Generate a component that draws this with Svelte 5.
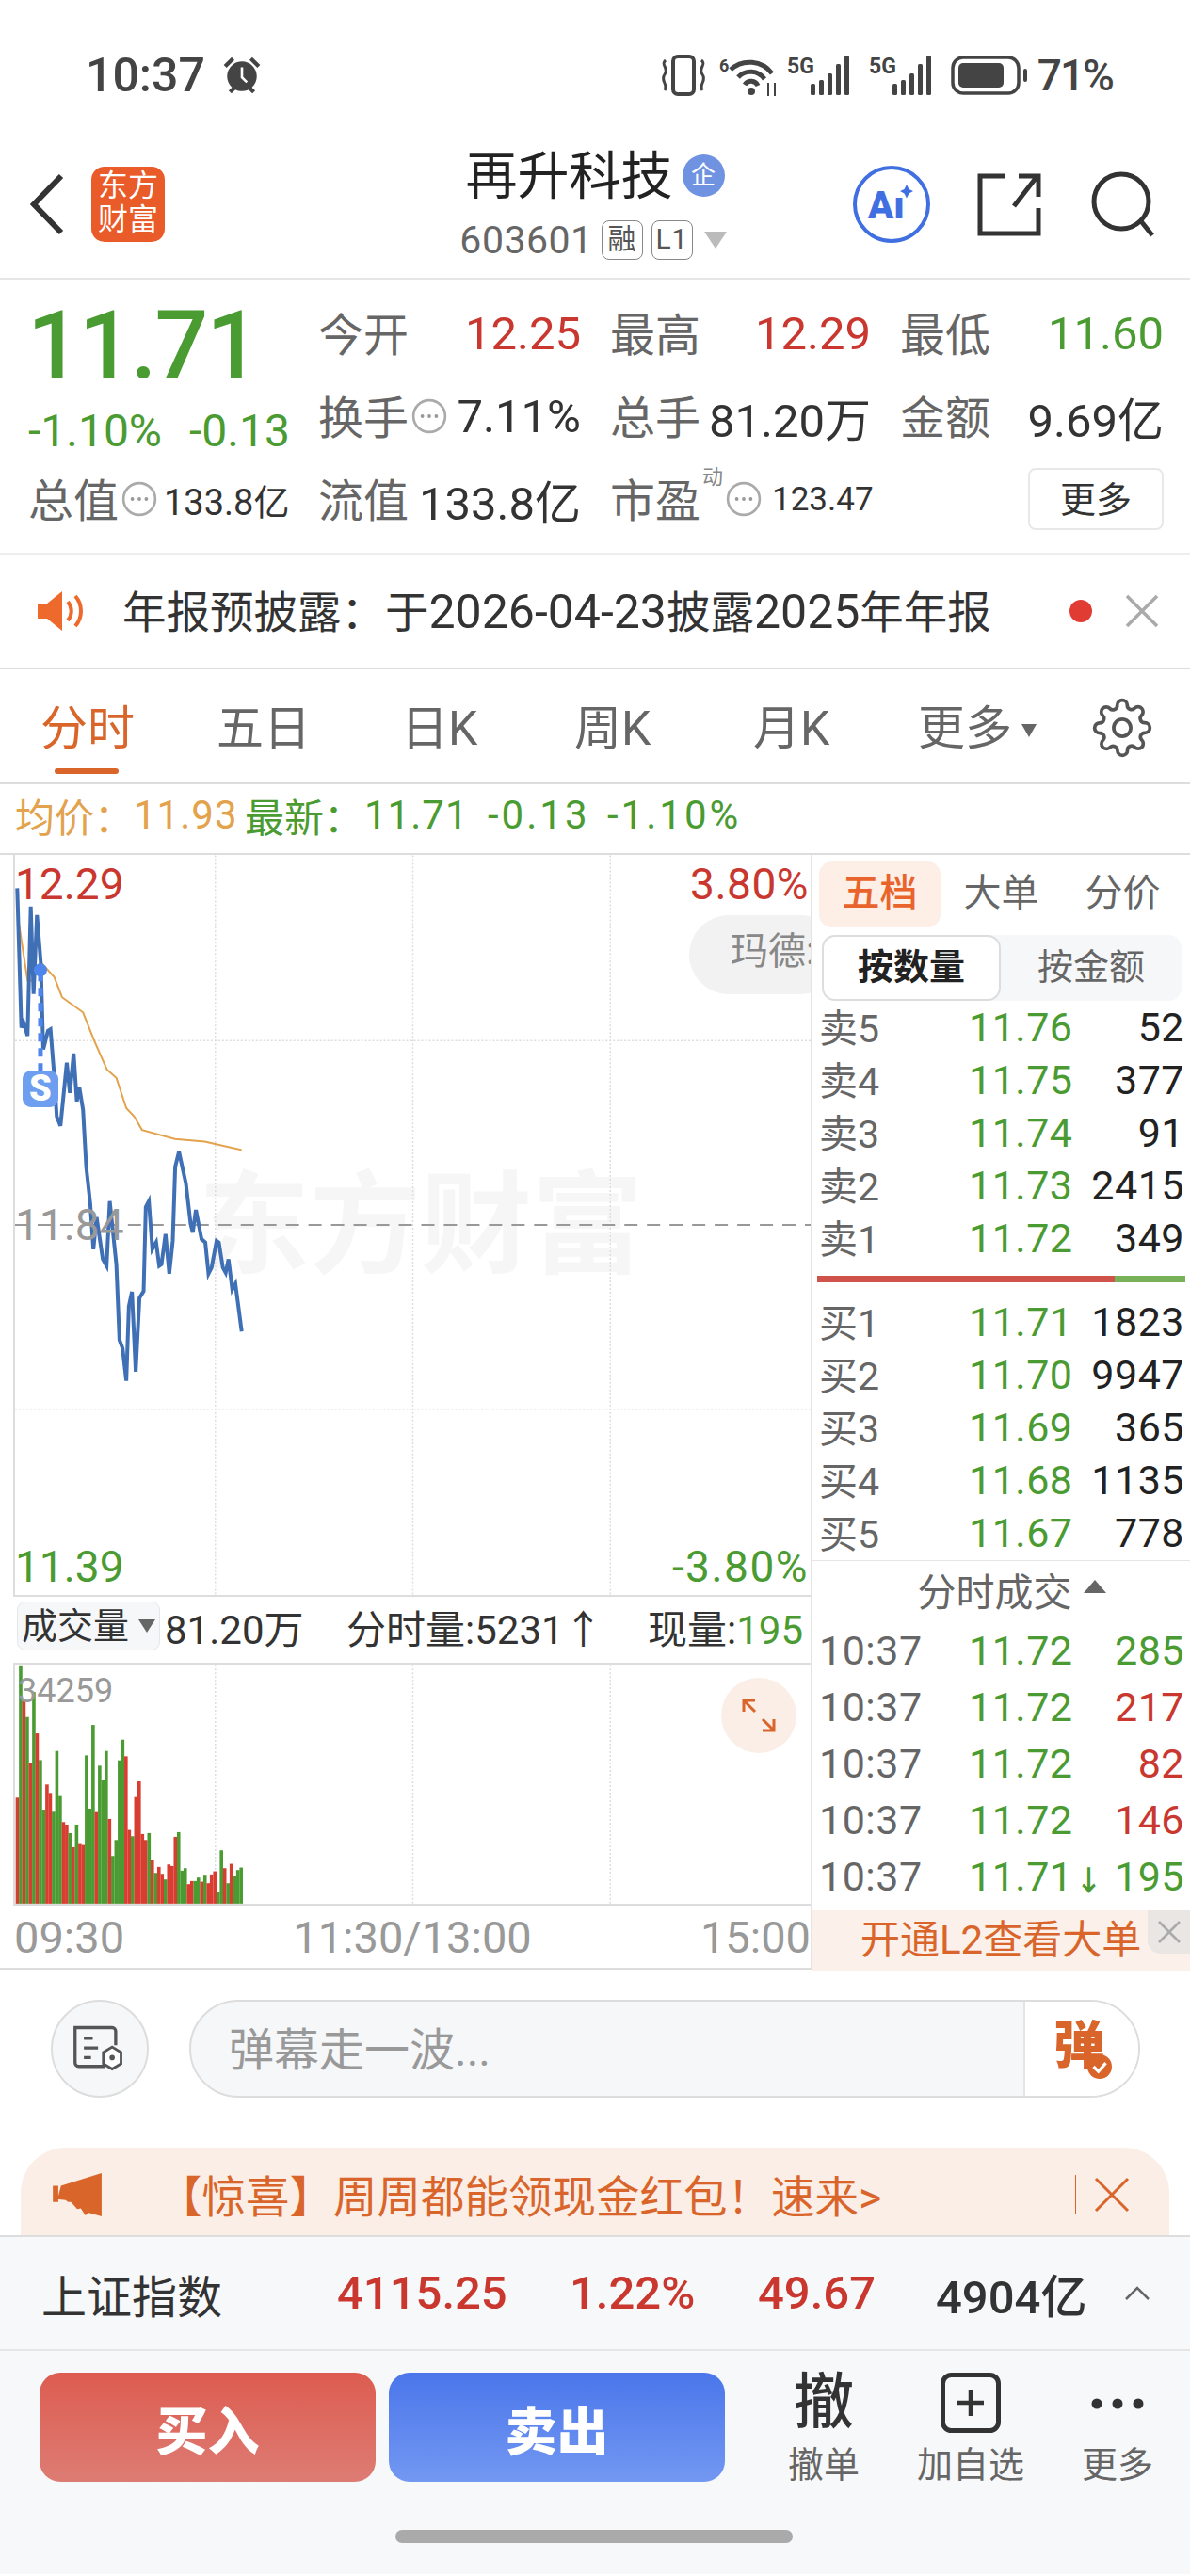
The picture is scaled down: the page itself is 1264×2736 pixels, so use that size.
<script lang="ts">
  // price line, read off the chart as [x, y] in px relative to the chart box
  const rawLine = [[52,120],[65,535],[72,520],[85,560],[95,175],[104,435],[115,200],[127,340],[135,600],[150,545],[158,540],[170,680],[178,800],[190,828],[210,640],[220,730],[232,612],[242,755],[250,712],[262,780],[272,950],[285,1060],[295,1195],[305,1100],[325,1225],[337,1245],[347,1052],[368,1240],[378,1465],[388,1490],[400,1587],[408,1365],[418,1322],[430,1560],[442,1340],[455,1320],[462,1070],[472,1052],[483,1195],[495,1175],[505,1245],[512,1240],[525,1150],[537,1268],[548,1170],[556,950],[568,905],[590,1000],[605,1120],[612,1145],[622,1078],[640,1165],[652,1175],[662,1268],[672,1250],[688,1170],[695,1175],[708,1250],[717,1265],[726,1225],[738,1315],[748,1298],[768,1440]];
  const rawAvg = [[58,230],[85,395],[100,395],[127,340],[170,385],[195,445],[262,490],[298,575],[338,660],[368,685],[400,775],[425,800],[450,840],[555,867],[650,875],[768,900]];
  const toPts = (a: number[][]) => a.map(([x, y]) => `${(x / 3 - 15).toFixed(1)},${(y / 2.8 - 8).toFixed(1)}`).join(' ');

  const volTops = [687,265,380,430,575,350,482,567,725,645,672,732,538,682,765,773,800,845,773,835,838,552,722,455,733,585,632,538,755,873,822,568,502,555,790,810,685,635,803,822,800,887,927,908,930,948,900,905,812,797,920,912,963,953,953,942,955,933,960,932,922,987,855,912,960,898,938,918,910];
  const volCols = 'rgrgrgrggrrgggrrgrgrrgggrgggrgggg' + 'rrgrrrrgrgrrgrrrgggrrggrgrrrggrgrgg';

  const sells = [['卖5','11.76','52'],['卖4','11.75','377'],['卖3','11.74','91'],['卖2','11.73','2415'],['卖1','11.72','349']];
  const buys = [['买1','11.71','1823'],['买2','11.70','9947'],['买3','11.69','365'],['买4','11.68','1135'],['买5','11.67','778']];
  const trades = [['11.72','285','g',''],['11.72','217','r',''],['11.72','82','r',''],['11.72','146','r',''],['11.71','195','g','↓']];
</script>

{#snippet info()}
  <svg class="info" viewBox="0 0 36 36"><circle cx="18" cy="18" r="16" fill="none" stroke="#aaa" stroke-width="2.5"/><circle cx="11" cy="18" r="1.8" fill="#999"/><circle cx="18" cy="18" r="1.8" fill="#999"/><circle cx="25" cy="18" r="1.8" fill="#999"/></svg>
{/snippet}

{#snippet signal()}
  <svg class="sig" viewBox="0 0 72 44">
    <text x="0" y="20" font-size="23" font-weight="700" fill="#444" font-family="Roboto">5G</text>
    <g fill="#444"><rect x="25" y="31" width="5" height="12" rx="1.5"/><rect x="34" y="27" width="5" height="16" rx="1.5"/><rect x="43" y="20" width="5" height="23" rx="1.5"/><rect x="52" y="10" width="5" height="33" rx="1.5"/><rect x="61" y="1" width="5" height="42" rx="1.5"/></g>
  </svg>
{/snippet}

<div class="page">
  <div class="status">
    <span class="clock">10:37</span>
    <svg class="alarm" viewBox="0 0 40 40"><circle cx="20" cy="21" r="15" fill="#444"/><path d="M20 12v10l5 5" fill="none" stroke="#fff" stroke-width="2.5"/><path d="M3 11 11 3M37 11 29 3M8 37l4-4M32 37l-4-4" stroke="#444" stroke-width="4"/></svg>
    <div class="spacer"></div>
    <svg class="vib" viewBox="0 0 52 44"><rect x="15" y="2" width="22" height="40" rx="5" fill="none" stroke="#444" stroke-width="4"/><path d="M7 6c-6 5 4 8-1 15s4 10 0 17M45 6c6 5-4 8 1 15s-4 10 0 17" fill="none" stroke="#444" stroke-width="3"/></svg>
    <svg class="wifi" viewBox="0 0 64 44"><text x="0" y="18" font-size="18" font-weight="700" fill="#444" font-family="Roboto">6</text><path d="M12 16a30 30 0 0 1 44 4M20 24a18 18 0 0 1 28 2M27 32a8 8 0 0 1 14 1" fill="none" stroke="#444" stroke-width="5"/><circle cx="34" cy="39" r="4" fill="#444"/><path d="M52 30v14M59 44V30" stroke="#444" stroke-width="2"/></svg>
    {@render signal()}
    {@render signal()}
    <svg class="batt" viewBox="0 0 82 44"><rect x="2" y="3" width="70" height="38" rx="11" fill="none" stroke="#444" stroke-width="3.5"/><rect x="8" y="9" width="48" height="26" rx="5" fill="#444"/><rect x="77" y="15" width="4" height="14" rx="2" fill="#444"/></svg>
    <span class="pct">71%</span>
  </div>

  <header class="head">
    <svg class="back" viewBox="0 0 36 66"><path d="M33 3 4 33l29 30" fill="none" stroke="#333" stroke-width="6"/></svg>
    <div class="logo">东方<br/>财富</div>
    <div class="head-mid">
      <div class="title">再升科技<span class="qi">企</span></div>
      <div class="code">603601<span class="tag">融</span><span class="tag">L1</span><i class="tri"></i></div>
    </div>
    <svg class="ai" viewBox="0 0 84 84"><circle cx="42" cy="42" r="39" fill="none" stroke="#3f6fe0" stroke-width="4"/><text x="17" y="57" font-size="40" font-weight="900" fill="#3f6fe0" font-family="Roboto">Aı</text><path d="m58 21 2.5 5 4.5 2-4.5 2.500-2.500 5-2.500-5-4.500-2.500 4.500-2z" fill="#3f6fe0"/></svg>
    <svg class="share" viewBox="0 0 68 68"><path d="M30 4H3v61h62V38M39 36 63 5M44 4h21v22" fill="none" stroke="#333" stroke-width="5"/></svg>
    <svg class="search" viewBox="0 0 70 72"><circle cx="33" cy="33" r="29" fill="none" stroke="#333" stroke-width="5"/><path d="m54 54 12 15" stroke="#333" stroke-width="5"/></svg>
  </header>

  <section class="quote">
    <div class="q-left">
      <div class="big">11.71</div>
      <div class="chg"><span>-1.10%</span><span>-0.13</span></div>
      <div class="tot"><b>总值</b>{@render info()}<span>133.8亿</span></div>
    </div>
    <div class="q-grid">
      <div class="cell"><b>今开</b><span class="red">12.25</span></div>
      <div class="cell"><b>最高</b><span class="red">12.29</span></div>
      <div class="cell"><b>最低</b><span class="green">11.60</span></div>
      <div class="cell"><b>换手</b>{@render info()}<span>7.11%</span></div>
      <div class="cell"><b>总手</b><span>81.20万</span></div>
      <div class="cell"><b>金额</b><span>9.69亿</span></div>
      <div class="cell"><b>流值</b><span>133.8亿</span></div>
      <div class="cell pe"><b>市盈</b><sup>动</sup>{@render info()}<span>123.47</span></div>
      <div class="cell end"><button>更多</button></div>
    </div>
  </section>

  <section class="notice">
    <svg class="horn" viewBox="0 0 52 44"><path d="M0 14h10L26 1v42L10 30H0z" fill="#ee6a2c"/><path d="M32 12c5 6 5 14 0 20M40 6c8 9 8 23 0 32" fill="none" stroke="#ee6a2c" stroke-width="4"/></svg>
    <span class="n-text">年报预披露：于<span>2026-04-23</span>披露<span>2025</span>年年报</span>
    <i class="dot"></i>
    <svg class="n-x" viewBox="0 0 36 36"><path d="m2 2 32 32M34 2 2 34" stroke="#aaa" stroke-width="3.5"/></svg>
  </section>

  <nav class="tabs">
    <a class="on" href="#a">分时</a><a href="#a">五日</a><a href="#a">日K</a><a href="#a">周K</a><a href="#a">月K</a><a href="#a">更多<i class="tri small"></i></a>
    <svg class="gear" viewBox="0 0 24 24"><path d="M19.4 15a1.65 1.65 0 0 0 .33 1.82l.06.06a2 2 0 0 1 0 2.83 2 2 0 0 1-2.83 0l-.06-.06a1.65 1.65 0 0 0-1.82-.33 1.65 1.65 0 0 0-1 1.51V21a2 2 0 0 1-2 2 2 2 0 0 1-2-2v-.09A1.65 1.65 0 0 0 9 19.4a1.65 1.65 0 0 0-1.82.33l-.06.06a2 2 0 0 1-2.83 0 2 2 0 0 1 0-2.83l.06-.06a1.65 1.65 0 0 0 .33-1.82 1.65 1.65 0 0 0-1.51-1H3a2 2 0 0 1-2-2 2 2 0 0 1 2-2h.09A1.65 1.65 0 0 0 4.6 9a1.65 1.65 0 0 0-.33-1.82l-.06-.06a2 2 0 0 1 0-2.83 2 2 0 0 1 2.83 0l.06.06a1.65 1.65 0 0 0 1.82.33H9a1.65 1.65 0 0 0 1-1.51V3a2 2 0 0 1 2-2 2 2 0 0 1 2 2v.09a1.65 1.65 0 0 0 1 1.51 1.65 1.65 0 0 0 1.82-.33l.06-.06a2 2 0 0 1 2.83 0 2 2 0 0 1 0 2.83l-.06.06a1.65 1.65 0 0 0-.33 1.82V9a1.65 1.65 0 0 0 1.51 1H21a2 2 0 0 1 2 2 2 2 0 0 1-2 2h-.09a1.65 1.65 0 0 0-1.51 1z" fill="none" stroke="#555" stroke-width="1.4"/><circle cx="12" cy="12" r="3.4" fill="none" stroke="#555" stroke-width="1.4"/></svg>
  </nav>

  <div class="avg">
    <span class="orange a1">均价：</span><span class="orange a2">11.93</span><span class="green a3">最新：</span><span class="green a4">11.71</span><span class="green a5">-0.13</span><span class="green a6">-1.10%</span>
  </div>

  <div class="main">
    <div class="left">
      <div class="chart">
        <div class="mark">东方财富</div>
        <svg class="plot" viewBox="0 0 846 786">
          <g stroke="#ddd" stroke-width="1.5" stroke-dasharray="2 2">
            <path d="M213 0v786M423 0v786M633 0v786M0 197h846M0 589h846"/>
          </g>
          <path d="M0 393h846" stroke="#999" stroke-width="2" stroke-dasharray="14 10"/>
          <polyline points={toPts(rawAvg)} fill="none" stroke="#e3a24c" stroke-width="2"/>
          <polyline points={toPts(rawLine)} fill="none" stroke="#3f6fb5" stroke-width="4"/>
          <path d="M27 125v105" stroke="#4f86ee" stroke-width="5" stroke-dasharray="9 7"/>
          <circle cx="27" cy="122" r="7" fill="#4f86ee"/>
        </svg>
        <span class="lbl tl red">12.29</span>
        <span class="lbl tr red">3.80%</span>
        <span class="lbl ml gray">11.84</span>
        <span class="lbl bl green">11.39</span>
        <span class="lbl br green">-3.80%</span>
        <div class="pill">玛德:</div>
        <div class="s-mark">S</div>
      </div>
      <div class="vol-row">
        <span class="sel">成交量<i class="tri dark"></i></span><span class="v1">81.20万</span><span class="v2">分时量:5231↑</span><span class="v3">现量:<em>195</em></span>
      </div>
      <div class="vol">
        <svg class="plot" viewBox="0 0 846 254">
          <path d="M213 0v254M423 0v254M633 0v254" stroke="#ddd" stroke-width="1.5" stroke-dasharray="2 2"/>
          {#each volTops as t, i}
            <rect x={(47 + 10.5 * i) / 3 - 15} y={(t - 263) / 3} width="3.6" height={(1025 - t) / 3} fill={volCols[i] === 'r' ? '#d93c30' : '#4a9b32'}/>
          {/each}
        </svg>
        <span class="vmax">34259</span>
        <div class="expand"><svg viewBox="0 0 40 40"><path d="M4 16V4h12M4 4l12 12M36 24v12H24M36 36 24 24" fill="none" stroke="#d9652b" stroke-width="3"/></svg></div>
      </div>
      <div class="axis"><span>09:30</span><span>11:30/13:00</span><span>15:00</span></div>
    </div>

    <aside class="right">
      <div class="r-tabs"><span class="on">五档</span><span>大单</span><span>分价</span></div>
      <div class="toggle"><span class="on">按数量</span><span>按金额</span></div>
      {#each sells as r}
        <div class="row"><span class="k">{r[0]}</span><span class="p">{r[1]}</span><span class="n">{r[2]}</span></div>
      {/each}
      <div class="split"><i></i><i></i></div>
      {#each buys as r}
        <div class="row"><span class="k">{r[0]}</span><span class="p">{r[1]}</span><span class="n">{r[2]}</span></div>
      {/each}
      <div class="tick-head">分时成交<i class="up"></i></div>
      <div class="ticks">
        {#each trades as r}
          <div class="row t"><span class="k">10:37</span><span class="p">{r[0]}<small>{r[3]}</small></span><span class="n {r[2] === 'r' ? 'red' : 'green'}">{r[1]}</span></div>
        {/each}
      </div>
      <div class="l2">开通L2查看大单
        <span class="l2-x"><svg viewBox="0 0 26 26"><path d="m2 2 22 22M24 2 2 24" stroke="#aaa" stroke-width="2.5"/></svg></span>
      </div>
    </aside>
  </div>

  <div class="danmu">
    <div class="round"><svg viewBox="0 0 64 64"><path d="M38 52H8a4 4 0 0 1-4-4V8h42a4 4 0 0 1 4 4v16M14 20h10M14 31h16M14 42h8" fill="none" stroke="#555" stroke-width="3.5"/><path d="m46 30 10 6v13l-10 6-10-6V36z" fill="#fff" stroke="#555" stroke-width="3"/><circle cx="46" cy="42" r="3" fill="#555"/></svg></div>
    <div class="inp">
      <span class="ph">弹幕走一波...</span>
      <div class="send">弹<i><svg viewBox="0 0 20 20"><path d="m5 10 4 4 6-7" fill="none" stroke="#fff" stroke-width="2.5"/></svg></i></div>
    </div>
  </div>

  <div class="promo">
    <svg class="p-horn" viewBox="0 0 56 48"><path d="M0 14h6v18H0zM9 14 54 0v48l-14-4-4 3-5-8-4 1-7-8-3 0-3-2-9-1z" fill="#d9652b"/></svg>
    <span class="p-text">【惊喜】周周都能领现金红包！速来&gt;</span>
    <i class="p-sep"></i>
    <svg class="p-x" viewBox="0 0 38 38"><path d="m2 2 34 34M36 2 2 36" stroke="#d9652b" stroke-width="3"/></svg>
  </div>

  <div class="index">
    <span class="i-name">上证指数</span><span class="i1 red">4115.25</span><span class="i2 red">1.22%</span><span class="i3 red">49.67</span><span class="i4">4904亿</span>
    <svg class="caret" viewBox="0 0 28 16"><path d="M2 14 14 2l12 12" fill="none" stroke="#666" stroke-width="2.5"/></svg>
  </div>

  <div class="actions">
    <button class="btn buy">买入</button>
    <button class="btn sell">卖出</button>
    <div class="tool first"><span class="glyph">撤</span><small>撤单</small></div>
    <div class="tool"><svg class="plus" viewBox="0 0 64 64"><rect x="2.5" y="2.5" width="59" height="59" rx="9" fill="none" stroke="#333" stroke-width="5"/><path d="M32 18v28M18 32h28" stroke="#333" stroke-width="4.5"/></svg><small>加自选</small></div>
    <div class="tool"><svg class="plus" viewBox="0 0 64 64"><g fill="#333"><circle cx="10" cy="33" r="5.5"/><circle cx="32" cy="33" r="5.5"/><circle cx="54" cy="33" r="5.5"/></g></svg><small>更多</small></div>
  </div>

  <div class="home"><i></i></div>
</div>

<style>
  :global(body) { margin: 0; background: #fff; }
  .page {
    width: 1264px; height: 2736px; overflow: hidden; background: #fff; color: #333;
    font-family: Roboto, "Noto Sans CJK SC", sans-serif; font-size: 40px;
  }
  i { font-style: normal; display: block; }
  em { font-style: normal; }
  .red { color: #c9372f; }
  .green { color: #4a9b32; }
  .gray { color: #999; }
  .orange { color: #e3a24c; }

  /* status bar */
  .status { height: 130px; display: flex; align-items: center; padding: 30px 82px 0 91px; box-sizing: border-box; color: #444; }
  .clock { font-size: 50px; font-weight: 500; }
  .alarm { width: 42px; height: 42px; margin-left: 18px; }
  .spacer { flex: 1; }
  .status svg { height: 44px; flex: none; }
  .vib { width: 52px; margin-right: 12px; }
  .wifi { width: 64px; margin-right: 8px; }
  .sig { width: 72px; margin-right: 15px; }
  .batt { width: 82px; margin-right: 10px; }
  .pct { font-size: 46px; font-weight: 500; letter-spacing: -2px; }

  /* title */
  .head { height: 167px; border-bottom: 2px solid #e6e6e6; box-sizing: border-box; padding-top: 8px; display: flex; align-items: center; }
  .back { width: 36px; height: 66px; margin: 0 29px 0 32px; flex: none; }
  .logo { width: 78px; height: 80px; border-radius: 14px; background: #ea5b2a; color: #fff; font-size: 32px; line-height: 36px; text-align: center; padding-top: 2px; box-sizing: border-box; flex: none; }
  .head-mid { width: 640px; box-sizing: border-box; margin-left: 90px; padding-left: 90px; flex: none; display: flex; flex-direction: column; align-items: center; }
  .title { font-size: 55px; color: #222; line-height: 64px; display: flex; align-items: center; padding-left: 4px; }
  .qi { width: 45px; height: 45px; border-radius: 50%; background: #6f93e0; color: #fff; font-size: 26px; line-height: 45px; text-align: center; margin-left: 10px; }
  .code { font-size: 41px; color: #666; display: flex; align-items: center; line-height: 48px; margin-top: 12px; letter-spacing: 0.5px; }
  .tag { height: 42px; min-width: 44px; padding: 0 3px; box-sizing: border-box; border: 1.5px solid #888; border-radius: 8px; font-size: 30px; line-height: 38px; text-align: center; margin-left: 9px; color: #555; }
  .tri { width: 0; height: 0; border-left: 12px solid transparent; border-right: 12px solid transparent; border-top: 18px solid #bbb; margin-left: 12px; }
  .tri.small { display: inline-block; border-left-width: 8px; border-right-width: 8px; border-top: 14px solid #666; vertical-align: 8px; margin-left: 10px; }
  .tri.dark { display: inline-block; border-left-width: 9px; border-right-width: 9px; border-top: 14px solid #666; vertical-align: 6px; margin-left: 10px; }
  .ai { width: 84px; height: 84px; flex: none; }
  .share { width: 68px; height: 68px; margin-left: 49px; flex: none; }
  .search { width: 70px; height: 72px; margin-left: 52px; flex: none; }

  /* quote */
  .quote { height: 290px; display: flex; border-bottom: 2px solid #eee; }
  .q-left { width: 308px; margin-left: 30px; padding-top: 20px; flex: none; }
  .big { font-size: 100px; line-height: 100px; color: #4a9b32; font-weight: 500; margin-left: -1px; letter-spacing: -2px; }
  .chg { height: 80px; display: flex; align-items: center; gap: 29px; font-size: 48px; color: #4a9b32; white-space: nowrap; }
  .tot { display: flex; align-items: center; height: 66px; font-size: 38px; white-space: nowrap; }
  .tot b { font-weight: 400; font-size: 48px; color: #666; margin-top: -5px; }
  .q-grid { width: 897px; padding-top: 13px; display: grid; grid-template-columns: 279px 277px 280px; column-gap: 31px; grid-auto-rows: 88px; }
  .cell { display: flex; align-items: center; font-size: 49px; white-space: nowrap; }
  .cell b { font-weight: 400; font-size: 48px; color: #666; margin-top: -5px; }
  .cell span { margin-left: auto; }
  .cell sup { font-size: 22px; color: #888; align-self: flex-start; margin: 8px 0 0 2px; line-height: 26px; }
  .pe span { font-size: 35px; margin-left: 11px; }
  .end { justify-content: flex-end; }
  .end button { width: 144px; height: 66px; background: #fff; border: 2px solid #e8e8e8; border-radius: 8px; font: inherit; font-size: 38px; color: #333; padding: 0 0 6px; }
  .info { width: 38px; height: 38px; flex: none; margin-left: 3px; }
  .tot .info { margin: 0 7px 0 3px; }

  /* notice */
  .notice { height: 120px; border-bottom: 2px solid #ddd; display: flex; align-items: center; }
  .horn { width: 52px; height: 44px; margin: 0 38px 0 40px; flex: none; }
  .n-text { font-size: 46.5px; color: #333; width: 1006px; margin-top: -6px; white-space: nowrap; flex: none; }
  .n-text span { font-size: 50px; }
  .dot { width: 24px; height: 24px; border-radius: 50%; background: #e03c34; flex: none; }
  .n-x { width: 36px; height: 36px; margin-left: 35px; flex: none; }

  /* period tabs */
  .tabs { height: 120px; box-sizing: content-box; border-bottom: 2px solid #ddd; display: flex; align-items: center; position: relative; font-size: 50px; }
  .tabs a { color: #666; text-decoration: none; position: absolute; left: 230px; top: 33px; line-height: 60px; }
  .tabs a:nth-child(1) { left: 43px; color: #d9652b; }
  .tabs a:nth-child(3) { left: 426px; }
  .tabs a:nth-child(4) { left: 610px; }
  .tabs a:nth-child(5) { left: 800px; }
  .tabs a:nth-child(6) { left: 975px; }
  .tabs a.on::after { content: ""; position: absolute; left: 15px; right: 17px; top: 72px; height: 6px; border-radius: 3px; background: #d9652b; }
  .gear { position: absolute; left: 1160px; top: 30px; width: 64px; height: 64px; }

  .avg { height: 73px; border-bottom: 2px solid #ddd; box-sizing: content-box; display: flex; align-items: center; padding: 0 0 0 16px; font-size: 42px; }
  .avg span { margin-top: -8px; white-space: nowrap; }
  .a1 { width: 126px; }
  .a2 { width: 118px; letter-spacing: 1px; }
  .a3 { width: 127px; }
  .a4 { width: 131px; letter-spacing: 1px; }
  .a5 { width: 127px; letter-spacing: 3px; }
  .a6 { letter-spacing: 3px; }

  /* chart side */
  .main { display: flex; height: 1182px; border-bottom: 2px solid #ddd; }
  .left { width: 861px; padding-left: 14px; box-sizing: border-box; flex: none; }
  .chart { height: 786px; border-left: 2px solid #ddd; border-bottom: 2px solid #ddd; position: relative; overflow: hidden; }
  .plot { position: absolute; left: 0; top: 0; width: 100%; height: 100%; }
  .mark { position: absolute; left: 195px; top: 330px; font-size: 118px; font-weight: 700; color: #f6f6f6; line-height: 130px; white-space: nowrap; }
  .lbl { position: absolute; font-size: 46px; line-height: 50px; }
  .tl { left: 0; top: 6px; }
  .tr { right: 2px; top: 6px; letter-spacing: 0.5px; }
  .ml { left: 0; top: 368px; }
  .bl { left: 0; bottom: 5px; }
  .br { right: 2px; bottom: 5px; letter-spacing: 1.5px; }
  .pill { position: absolute; left: 716px; top: 64px; width: 160px; height: 84px; border-radius: 42px; background: #f2f2f2; color: #888; font-size: 40px; line-height: 78px; padding-left: 44px; box-sizing: border-box; white-space: nowrap; overflow: hidden; }
  .s-mark { position: absolute; left: 8px; top: 229px; width: 38px; height: 39px; border-radius: 9px; background: #6d9ef0; color: #fff; font-size: 38px; font-weight: 900; line-height: 39px; text-align: center; }

  .vol-row { height: 70px; box-sizing: border-box; padding: 0 0 8px 4px; display: flex; align-items: center; font-size: 42px; white-space: nowrap; }
  .sel { width: 152px; height: 52px; line-height: 50px; box-sizing: border-box; border: 1.5px solid #e4e6ea; border-radius: 9px; background: #f6f7f9; font-size: 38px; text-align: center; white-space: nowrap; margin-right: 5px; flex: none; }
  .v1 { width: 193px; flex: none; }
  .v2 { width: 320px; flex: none; }
  .v3 em { color: #4a9b32; }
  .vol { height: 254px; border: 0 solid #ddd; border-width: 2px 0 2px 2px; position: relative; }
  .vmax { position: absolute; left: 3px; top: 8px; font-size: 36px; color: #999; line-height: 40px; }
  .expand { position: absolute; left: 750px; top: 14px; width: 80px; height: 80px; border-radius: 50%; background: #fbeee6; display: flex; align-items: center; justify-content: center; }
  .expand svg { width: 40px; height: 40px; }
  .axis { height: 66px; display: flex; justify-content: space-between; align-items: center; color: #999; font-size: 47px; padding: 0 0 0 1px; }

  /* order book */
  .right { flex: 1; border-left: 2px solid #e4e4e4; display: flex; flex-direction: column; box-sizing: border-box; }
  .r-tabs { height: 70px; margin: 7px 0 0 7px; display: flex; font-size: 40px; color: #666; flex: none; }
  .r-tabs span { width: 129px; text-align: center; line-height: 68px; border-radius: 14px; }
  .r-tabs .on { background: #fdeee6; color: #e9642c; font-weight: 500; }
  .toggle { height: 70px; margin: 8px 9px 0 10px; background: #f6f7f9; border-radius: 14px; display: flex; flex: none; color: #666; font-size: 38px; }
  .toggle span { flex: 1; text-align: center; line-height: 68px; }
  .toggle .on { flex: none; width: 190px; box-sizing: border-box; border: 2px solid #ddd; background: #fff; border-radius: 14px; color: #222; font-weight: 700; line-height: 64px; }
  .row { height: 56px; box-sizing: border-box; flex: none; display: grid; grid-template-columns: 159px 1fr auto; align-items: center; padding: 0 6px 6px 7px; font-size: 43px; white-space: nowrap; }
  .row .k { color: #666; font-size: 41px; margin-top: -4px; }
  .row .p { color: #4a9b32; white-space: nowrap; letter-spacing: 0.5px; }
  .row .p small { font-size: 30px; font-weight: 700; margin-left: 2px; }
  .row .n { color: #222; text-align: right; letter-spacing: 0.5px; }
  .row .n.green { color: #4a9b32; }
  .row .n.red { color: #c9372f; }
  .split { height: 7px; margin: 12px 5px 14px 5px; display: flex; flex: none; }
  .split i:first-child { width: 316px; background: #d0534b; }
  .split i:last-child { flex: 1; background: #77b25a; }
  .tick-head { height: 69px; margin-top: 1px; border-top: 1px solid #e6e6e6; display: flex; align-items: center; justify-content: center; font-size: 41px; color: #666; padding: 0 0 8px 22px; box-sizing: border-box; flex: none; }
  .up { width: 0; height: 0; border-left: 12px solid transparent; border-right: 12px solid transparent; border-bottom: 14px solid #666; margin: 0 0 6px 12px; }
  .ticks { height: 303px; flex: none; }
  .row.t { height: 60px; font-size: 43px; }
  .row.t .k { font-size: 43px; margin-top: 0; letter-spacing: 0.5px; }
  .l2 { flex: 1; background: #fbf1ea; color: #d9652b; font-size: 42px; line-height: 64px; padding-left: 51px; position: relative; white-space: nowrap; }
  .l2-x { position: absolute; right: 0; top: 0; width: 45px; height: 46px; background: #e9e6e3; border-radius: 0 0 0 14px; display: flex; align-items: center; justify-content: center; }
  .l2-x svg { width: 26px; height: 26px; }

  /* danmu input */
  .danmu { height: 166px; display: flex; align-items: center; padding: 2px 54px 0; box-sizing: border-box; }
  .round { width: 104px; height: 104px; box-sizing: border-box; border: 2px solid #ddd; border-radius: 50%; background: #f6f7f9; display: flex; align-items: center; justify-content: center; flex: none; }
  .round svg { width: 60px; height: 60px; }
  .inp { width: 1010px; height: 104px; margin-left: 43px; box-sizing: border-box; border: 2px solid #ddd; border-radius: 52px; background: #f6f7f9; display: flex; align-items: center; overflow: hidden; flex: none; }
  .ph { flex: 1; padding-left: 40px; font-size: 48px; color: #999; margin-top: -6px; }
  .send { width: 122px; height: 100%; border-left: 2px solid #e4e4e4; background: #fff; color: #d9652b; font-size: 54px; font-weight: 900; line-height: 96px; padding-left: 30px; box-sizing: border-box; position: relative; }
  .send i { position: absolute; left: 66px; top: 56px; width: 26px; height: 26px; border-radius: 50%; background: #d9652b; }
  .send svg { width: 26px; height: 26px; display: block; }

  .promo { height: 93px; margin: 23px 22px 0; width: 1220px; border-radius: 48px 48px 0 0; background: #fbeee6; display: flex; align-items: center; color: #d9652b; box-sizing: border-box; padding-top: 6px; }
  .p-horn { width: 56px; height: 46px; margin-left: 33px; flex: none; }
  .p-text { font-size: 46.5px; margin-left: 57px; width: 974px; flex: none; white-space: nowrap; margin-top: -2px; }
  .p-sep { width: 1px; height: 42px; background: #d9652b; flex: none; }
  .p-x { width: 38px; height: 38px; margin-left: 19px; flex: none; }

  /* index bar */
  .index { height: 119px; border-top: 2px solid #ddd; border-bottom: 2px solid #e6e6e6; background: #f7f8fa; display: flex; align-items: center; font-size: 49px; font-weight: 500; white-space: nowrap; }
  .i-name { font-size: 48px; font-weight: 400; margin-left: 44px; width: 314px; flex: none; }
  .i1 { width: 247px; flex: none; }
  .i2 { width: 200px; flex: none; }
  .i3 { width: 189px; flex: none; }
  .i4 { width: 200px; flex: none; }
  .caret { width: 28px; height: 16px; flex: none; }

  .actions { height: 190px; background: #f7f8fa; display: flex; padding: 23px 0 0 42px; box-sizing: border-box; }
  .btn { width: 357px; height: 116px; flex: none; border: 0; border-radius: 22px; color: #fff; font: inherit; font-size: 55px; font-weight: 900; padding: 0; }
  .buy { background: linear-gradient(#dd5c50, #dd7c74); }
  .sell { margin-left: 14px; background: linear-gradient(#4a76ea, #7398f2); }
  .tool { width: 156px; flex: none; display: flex; flex-direction: column; align-items: center; color: #333; }
  .tool.first { margin-left: 27px; }
  .tool small { font-size: 38px; color: #666; line-height: 44px; margin-top: 12px; }
  .glyph { font-size: 64px; line-height: 64px; font-weight: 500; }
  .plus { width: 64px; height: 64px; }
  .home { height: 47px; background: #f7f8fa; box-sizing: border-box; padding-left: 420px; }
  .home i { width: 422px; height: 14px; border-radius: 7px; background: #aaa; }
</style>
